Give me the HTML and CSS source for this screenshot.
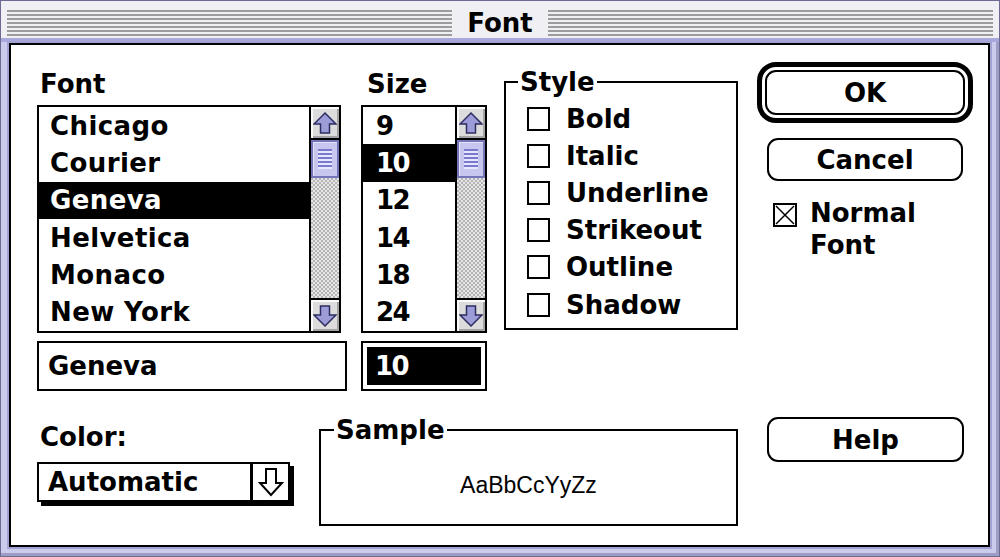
FILE: index.html
```html
<!DOCTYPE html>
<html lang="en">
<head>
    <meta charset="UTF-8">
    <title>Font</title>
    <link rel="stylesheet" href="styles.css">
</head>
<body>

<div class="window">
    <div class="titlebar">
        <div class="stripes"></div>
        <div class="title">Font</div>
        <div class="stripes"></div>
    </div>

    <div class="content">
        <div class="top">
            <div class="font-col">
                <div class="label">Font</div>
                <div class="list font-list">
                    <ul class="items">
                        <li>Chicago</li>
                        <li>Courier</li>
                        <li class="selected">Geneva</li>
                        <li>Helvetica</li>
                        <li>Monaco</li>
                        <li>New York</li>
                    </ul>
                    <div class="scrollbar">
                        <div class="arrow up">
                            <svg width="24" height="24" viewBox="0 0 24 24"><path d="M12 2 L23 13 L16.5 13 L16.5 22 L7.5 22 L7.5 13 L1 13 Z" fill="#9c9cd8" stroke="#2c2c60" stroke-width="1.5" stroke-linejoin="miter"/></svg>
                        </div>
                        <div class="track"><div class="thumb"><div class="grip"></div></div></div>
                        <div class="arrow down">
                            <svg width="24" height="24" viewBox="0 0 24 24"><path d="M12 22 L23 11 L16.5 11 L16.5 2 L7.5 2 L7.5 11 L1 11 Z" fill="#9c9cd8" stroke="#2c2c60" stroke-width="1.5"/></svg>
                        </div>
                    </div>
                </div>
                <div class="edit">Geneva</div>
            </div>

            <div class="size-col">
                <div class="label">Size</div>
                <div class="list size-list">
                    <ul class="items">
                        <li>9</li>
                        <li class="selected">10</li>
                        <li>12</li>
                        <li>14</li>
                        <li>18</li>
                        <li>24</li>
                    </ul>
                    <div class="scrollbar">
                        <div class="arrow up">
                            <svg width="24" height="24" viewBox="0 0 24 24"><path d="M12 2 L23 13 L16.5 13 L16.5 22 L7.5 22 L7.5 13 L1 13 Z" fill="#9c9cd8" stroke="#2c2c60" stroke-width="1.5"/></svg>
                        </div>
                        <div class="track"><div class="thumb"><div class="grip"></div></div></div>
                        <div class="arrow down">
                            <svg width="24" height="24" viewBox="0 0 24 24"><path d="M12 22 L23 11 L16.5 11 L16.5 2 L7.5 2 L7.5 11 L1 11 Z" fill="#9c9cd8" stroke="#2c2c60" stroke-width="1.5"/></svg>
                        </div>
                    </div>
                </div>
                <div class="edit size-edit"><span class="value">10</span></div>
            </div>

            <fieldset class="group style-group">
                <legend>Style</legend>
                <div class="check-row"><span class="box"></span>Bold</div>
                <div class="check-row"><span class="box"></span>Italic</div>
                <div class="check-row"><span class="box"></span>Underline</div>
                <div class="check-row"><span class="box"></span>Strikeout</div>
                <div class="check-row"><span class="box"></span>Outline</div>
                <div class="check-row"><span class="box"></span>Shadow</div>
            </fieldset>

            <div class="buttons">
                <div class="default-ring"><div class="btn ok">OK</div></div>
                <div class="btn cancel">Cancel</div>
                <div class="normal">
                    <svg class="xbox" width="24" height="24" viewBox="0 0 24 24"><rect x="1" y="1" width="22" height="22" fill="#fff" stroke="#000" stroke-width="2"/><path d="M3 3 L21 21 M21 3 L3 21" stroke="#000" stroke-width="1.5"/></svg>
                    <div class="normal-text">Normal<br>Font</div>
                </div>
            </div>
        </div>

        <div class="bottom">
            <div class="color-col">
                <div class="label color-label">Color:</div>
                <div class="popup">
                    <div class="value">Automatic</div>
                    <div class="drop">
                        <svg width="26" height="32" viewBox="0 0 26 32"><path d="M13 29 L2 17 L8 17 L8 3 L18 3 L18 17 L24 17 Z" fill="#fff" stroke="#000" stroke-width="2"/></svg>
                    </div>
                </div>
            </div>

            <fieldset class="group sample-group">
                <legend>Sample</legend>
                <div class="sample-text">AaBbCcYyZz</div>
            </fieldset>

            <div class="btn help">Help</div>
        </div>
    </div>
</div>

</body>
</html>
```

FILE: styles.css
```css
* {
    box-sizing: border-box;
}

body {
    margin: 0;
    background: #fff;
    color: #000;
    font-family: "DejaVu Sans", "Liberation Sans", sans-serif;
    font-weight: bold;
    font-size: 26px;
}

/* window frame */
.window {
    width: 1000px;
    height: 557px;
    display: flex;
    flex-direction: column;
    padding: 0 9px 9px 8px;
    background: #cbcbee;
    border: 1px solid #6a6a92;
    box-shadow: inset -3px -3px 0 #9c9cc4;
}

.titlebar {
    height: 41px;
    margin: 0 -9px 0 -8px;
    padding: 6px 6px 0 6px;
    display: flex;
    align-items: center;
    background: #f0f0f4;
    border-bottom: 4px solid #a8a8da;
}

.stripes {
    flex: 1;
    height: 26px;
    background: repeating-linear-gradient(to bottom, #9c9c9c 0 2px, transparent 2px 4px);
}

.title {
    padding: 0 15px;
    line-height: 30px;
}

.content {
    flex: 1;
    margin-top: 1px;
    padding: 17px 0 0 26px;
    background: #fff;
    border: 2px solid #000;
    box-shadow: 0 0 0 2px #a2a2d4;
}

.top {
    display: flex;
    align-items: flex-start;
}

.label {
    line-height: 30px;
    padding-left: 3px;
    margin-bottom: 6px;
}

/* lists */
.font-col {
    width: 310px;
    margin-top: 7px;
}

.size-col {
    width: 126px;
    margin: 7px 0 0 14px;
}

.size-col .label {
    padding-left: 6px;
}

.list {
    display: flex;
    height: 228px;
    border: 2px solid #000;
}

.font-list {
    width: 304px;
}

.size-list {
    width: 126px;
}

.items {
    flex: 1;
    margin: 0;
    padding: 0;
    list-style: none;
    display: flex;
    flex-direction: column;
}

.items li {
    flex: 1;
    display: flex;
    align-items: center;
    padding-left: 11px;
    line-height: 30px;
    letter-spacing: 0.4px;
}

.size-list .items li {
    padding-left: 13px;
    letter-spacing: -1.5px;
}

.items li.selected {
    background: #000;
    color: #fff;
}

.scrollbar {
    width: 30px;
    border-left: 2px solid #000;
    display: flex;
    flex-direction: column;
}

.arrow {
    height: 33px;
    display: flex;
    align-items: center;
    justify-content: center;
    background: #dcdcdc;
    box-shadow: inset 2px 2px 0 #fafafa, inset -2px -2px 0 #a4a4a4;
}

.arrow.up {
    border-bottom: 2px solid #000;
}

.arrow.down {
    border-top: 2px solid #000;
}

.track {
    flex: 1;
    background: repeating-conic-gradient(#b4b4b4 0 25%, #e6e6e6 0 50%) 0 0 / 4px 4px;
}

.thumb {
    height: 38px;
    display: flex;
    align-items: center;
    justify-content: center;
    background: #c6c6ee;
    border: 2px solid #7474b8;
    box-shadow: inset 1px 1px 0 #e4e4ff;
}

.grip {
    width: 14px;
    height: 20px;
    background: repeating-linear-gradient(to bottom, #7a7acc 0 2px, #e6e6ff 2px 4px);
}

/* edit fields */
.edit {
    height: 50px;
    margin-top: 8px;
    padding-left: 9px;
    display: flex;
    align-items: center;
    border: 2px solid #000;
    line-height: 30px;
}

.size-edit {
    width: 126px;
    padding: 4px;
}

.size-edit .value {
    height: 100%;
    width: 100%;
    display: flex;
    align-items: center;
    padding-left: 8px;
    background: #000;
    color: #fff;
    letter-spacing: -1.5px;
}

/* group boxes */
.group {
    margin: 0;
    padding: 0;
    border: 2px solid #000;
    min-width: 0;
}

.group legend {
    margin-left: 12px;
    padding: 0 2px;
    line-height: 30px;
}

.style-group {
    width: 234px;
    margin: 5px 0 0 17px;
    padding: 3px 0 5px 0;
}

.check-row {
    height: 37.2px;
    display: flex;
    align-items: center;
    padding-left: 21px;
    line-height: 30px;
}

.box {
    width: 23px;
    height: 24px;
    margin-right: 16px;
    border: 2px solid #000;
}

/* buttons */
.buttons {
    width: 216px;
    margin-left: 19px;
}

.btn {
    height: 45px;
    display: flex;
    align-items: center;
    justify-content: center;
    background: #fff;
    border: 2px solid #000;
    border-radius: 11px;
    line-height: 30px;
}

.default-ring {
    padding: 3px;
    border: 5px solid #000;
    border-radius: 19px;
}

.cancel {
    width: 196px;
    height: 43px;
    margin: 15px 10px 0;
}

.normal {
    display: flex;
    align-items: flex-start;
    margin: 16px 0 0 16px;
    line-height: 32px;
}

.xbox {
    margin: 6px 13px 0 0;
    flex-shrink: 0;
}

/* bottom row */
.bottom {
    display: flex;
    align-items: flex-start;
    margin-top: 24px;
}

.color-col {
    width: 259px;
    padding-top: 7px;
}

.color-label {
    margin-bottom: 10px;
}

.popup {
    width: 253px;
    height: 40px;
    display: flex;
    border: 2px solid #000;
    box-shadow: 4px 4px 0 #000;
    line-height: 30px;
}

.popup .value {
    flex: 1;
    display: flex;
    align-items: center;
    padding-left: 9px;
}

.popup .drop {
    width: 38px;
    display: flex;
    align-items: center;
    justify-content: center;
    border-left: 3px solid #000;
}

.sample-group {
    width: 419px;
    margin-left: 23px;
}

.group.sample-group legend {
    margin-left: 13px;
}

.sample-text {
    height: 79px;
    display: flex;
    align-items: center;
    justify-content: center;
    font-family: "Liberation Sans", sans-serif;
    font-weight: normal;
    font-size: 23px;
    line-height: 30px;
}

.help {
    width: 197px;
    margin: 2px 0 0 29px;
}
```
